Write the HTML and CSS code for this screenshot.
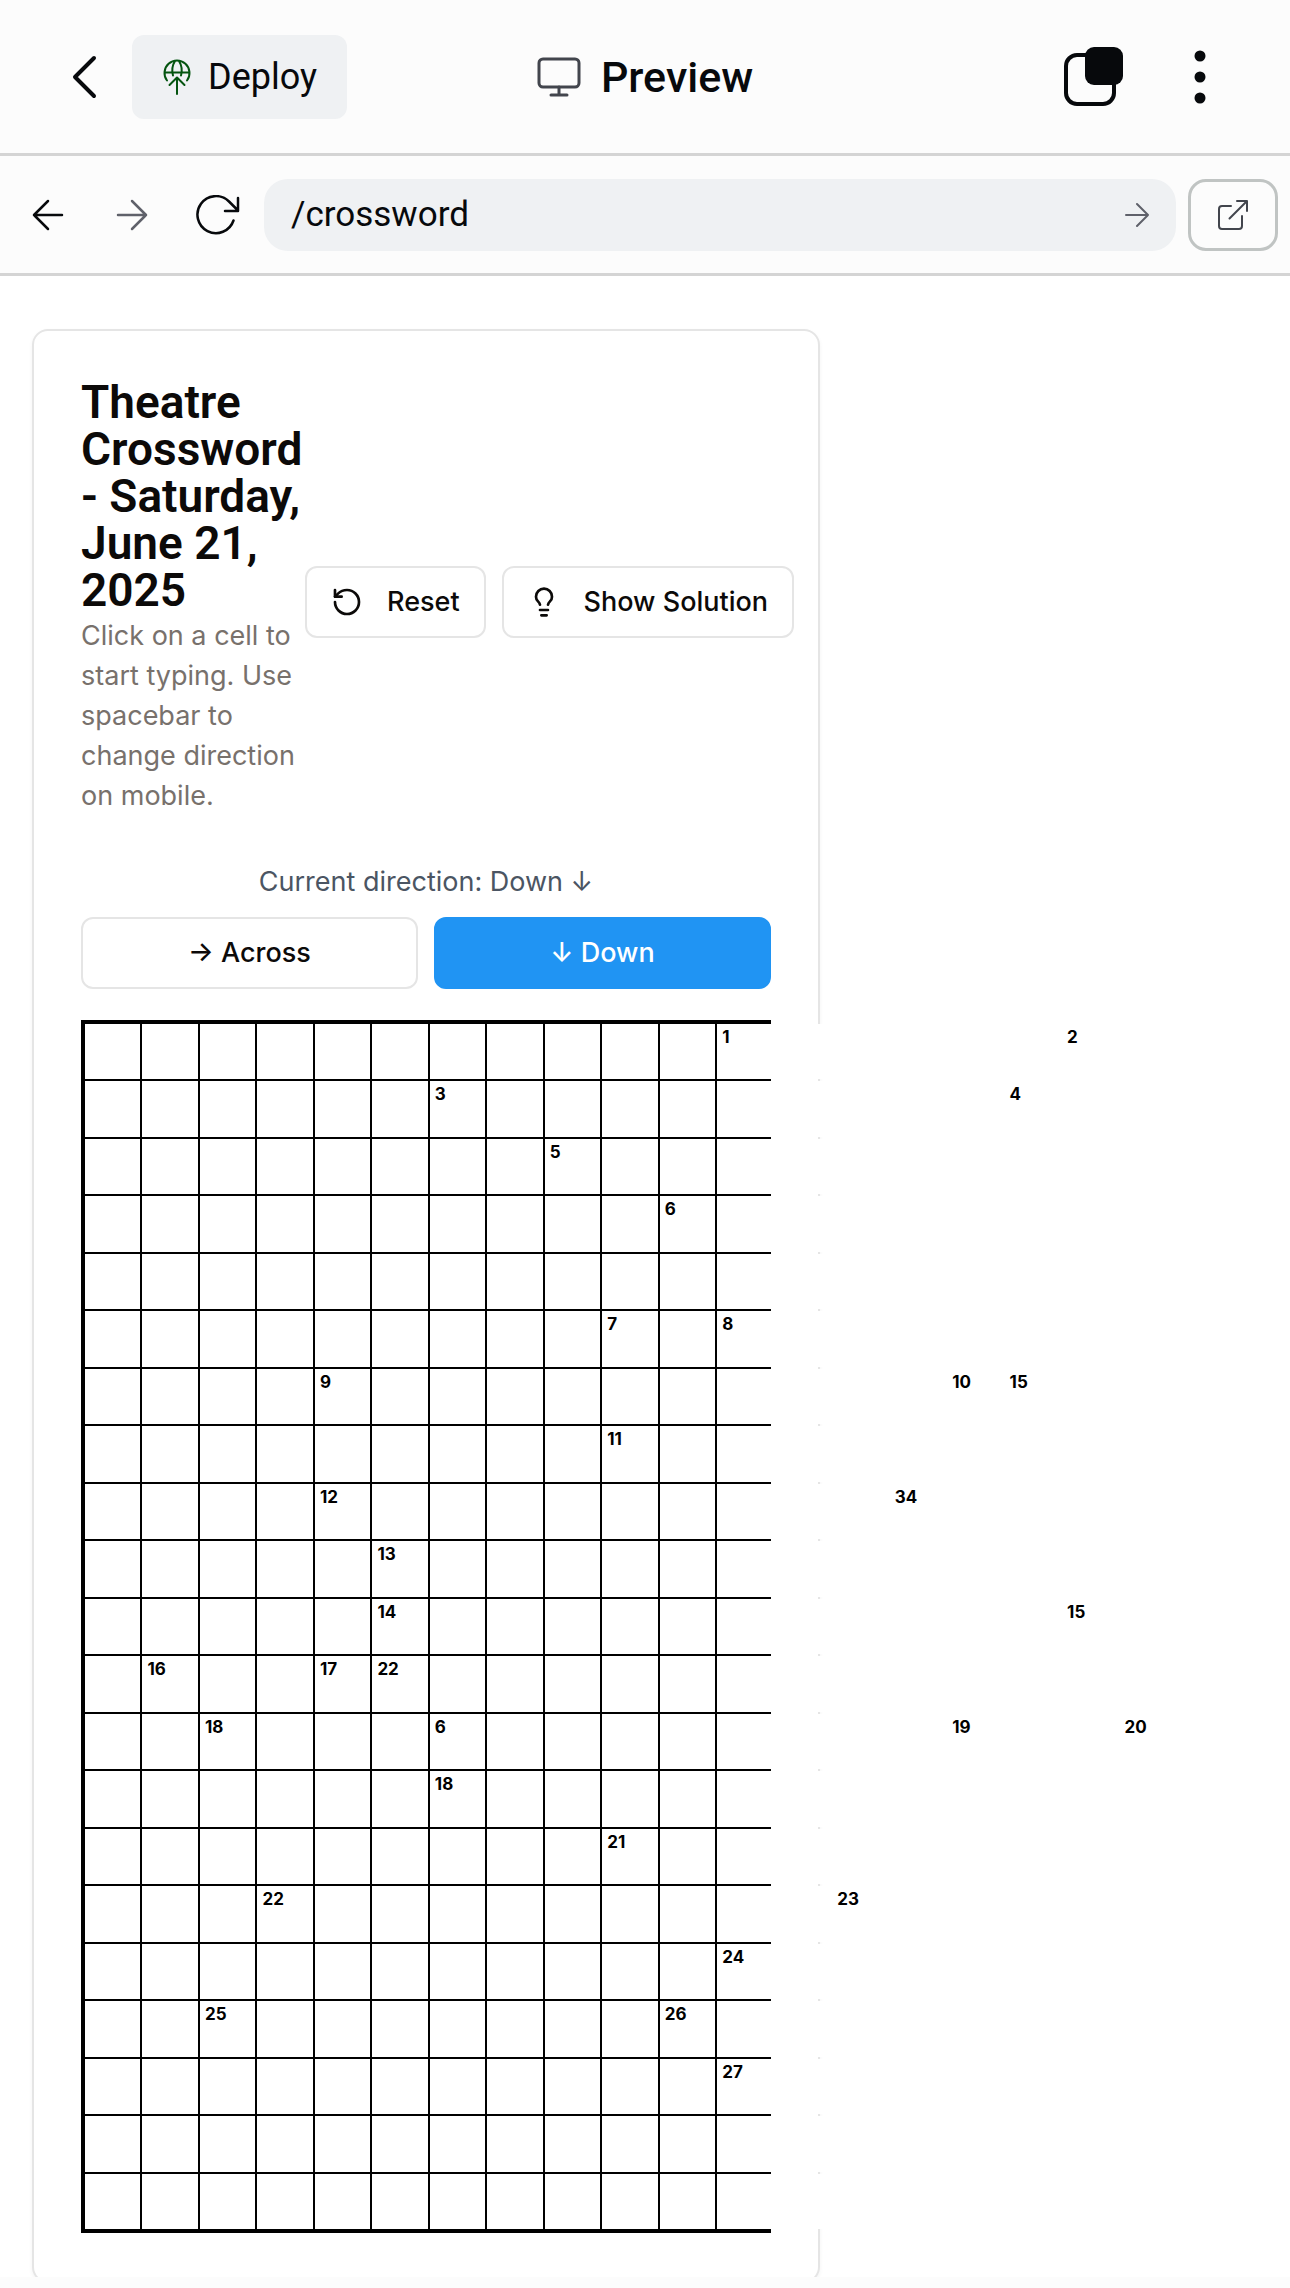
FILE: index.html
```html
<!DOCTYPE html>
<html lang="en">
<head>
<meta charset="utf-8">
<meta name="viewport" content="width=device-width, initial-scale=1">
<title>Theatre Crossword</title>
<link rel="stylesheet" href="styles.css">
</head>
<body>
<header class="topbar">
  <div class="topbar-left">
    <button class="icon-button" type="button" aria-label="Back">
      <svg width="26" height="44" viewBox="0 0 26 44" fill="none" stroke="#07090c" stroke-width="4" stroke-linecap="round" stroke-linejoin="round"><path d="M22 3 3 22l19 19"/></svg>
    </button>
    <button class="deploy" type="button">
      <svg width="28" height="36" viewBox="0 0 28 36" fill="none" stroke="#04540f" stroke-width="2" stroke-linecap="round" stroke-linejoin="round">
        <path d="M4 21.500A12.500 12.500 0 1 1 24 21.500M1.500 13.500h25M12 2C9.500 6 8.500 11 10 16.500M16 2C18.500 6 19.500 11 18 16.500M14 35V18.500M6.500 26l7.500-7.500 7.500 7.500"/>
      </svg>
      Deploy
    </button>
  </div>
  <h1 class="tab-title">
    <svg width="44" height="42" viewBox="0 0 44 42" fill="none" stroke="#42454d" stroke-width="3" stroke-linecap="round" stroke-linejoin="round"><rect x="2" y="3" width="40" height="28" rx="4"/><path d="M22 31v8M14 39h16"/></svg>
    Preview
  </h1>
  <div class="topbar-right">
    <button class="icon-button" type="button" aria-label="Tabs">
      <svg width="60" height="60" viewBox="0 0 60 60"><rect x="2" y="8" width="48" height="49" rx="11" fill="none" stroke="#07090c" stroke-width="4"/><rect x="21" y="0" width="38" height="38" rx="9" fill="#07090c"/></svg>
    </button>
    <button class="icon-button" type="button" aria-label="More">
      <svg width="12" height="54" viewBox="0 0 12 54" fill="#07090c"><circle cx="6" cy="6" r="5.500"/><circle cx="6" cy="27" r="5.500"/><circle cx="6" cy="48" r="5.500"/></svg>
    </button>
  </div>
</header>

<nav class="addressbar" aria-label="Page navigation">
  <div class="history">
    <button class="icon-button" type="button" aria-label="Go back">
      <svg width="32" height="32" viewBox="0 0 32 32" fill="none" stroke="#07090c" stroke-width="2.500" stroke-linecap="round" stroke-linejoin="round"><path d="M30 16H2M16 2 2 16l14 14"/></svg>
    </button>
    <button class="icon-button" type="button" aria-label="Go forward">
      <svg width="32" height="32" viewBox="0 0 32 32" fill="none" stroke="#5f616a" stroke-width="2.500" stroke-linecap="round" stroke-linejoin="round"><path d="M2 16h28M16 2l14 14-14 14"/></svg>
    </button>
    <button class="icon-button" type="button" aria-label="Reload">
      <svg width="44" height="40" viewBox="0 0 44 40" fill="none" stroke="#07090c" stroke-width="2.500" stroke-linecap="round" stroke-linejoin="round"><path d="M37.500 25.500A18.500 18.500 0 1 1 33 6.500L42 15.500M42 3v13H29"/></svg>
    </button>
  </div>
  <div class="address">
    <input class="address-input" type="text" value="/crossword" aria-label="Path">
    <button class="icon-button" type="button" aria-label="Go">
      <svg width="24" height="26" viewBox="0 0 24 26" fill="none" stroke="#5f616a" stroke-width="2" stroke-linecap="round" stroke-linejoin="round"><path d="M1 13h22M12 2l11 11-11 11"/></svg>
    </button>
  </div>
  <button class="open-external" type="button" aria-label="Open in new tab">
    <svg width="32" height="32" viewBox="0 0 32 32" fill="none" stroke="#42454d" stroke-width="2" stroke-linecap="round" stroke-linejoin="round"><path d="M14 7H5a3 3 0 0 0-3 3v17a3 3 0 0 0 3 3h17a3 3 0 0 0 3-3V17M12.500 19.500 30 2M20 2h10v10"/></svg>
  </button>
</nav>

<main class="viewport">
  <section class="card">
    <div class="card-header">
      <div class="card-heading">
        <h2 class="card-title">Theatre Crossword - Saturday, June 21, 2025</h2>
        <p class="card-text">Click on a cell to start typing. Use spacebar to change direction on mobile.</p>
      </div>
      <div class="card-actions">
        <button class="button button-icon" type="button">
          <svg width="32" height="32" viewBox="0 0 24 24" fill="none" stroke="currentColor" stroke-width="2" stroke-linecap="round" stroke-linejoin="round"><path d="M3 12a9 9 0 1 0 9-9 9.750 9.750 0 0 0-6.740 2.740L3 8"/><path d="M3 3v5h5"/></svg>
          Reset
        </button>
        <button class="button button-icon" type="button">
          <svg width="32" height="32" viewBox="0 0 24 24" fill="none" stroke="currentColor" stroke-width="2" stroke-linecap="round" stroke-linejoin="round"><path d="M15 14c.2-1 .7-1.700 1.500-2.500 1-.9 1.500-2.200 1.500-3.500A6 6 0 0 0 6 8c0 1 .2 2.200 1.500 3.500.7.7 1.300 1.500 1.500 2.500M9 18h6M10 22h4"/></svg>
          Show Solution
        </button>
      </div>
    </div>
    <p class="direction-text">Current direction: Down ↓</p>
    <div class="direction-buttons">
      <button class="button" type="button" aria-pressed="false">→ Across</button>
      <button class="button button-primary" type="button" aria-pressed="true">↓ Down</button>
    </div>
    <div class="board">
      <div class="board-cells" id="board"></div>
    </div>
  </section>
</main>
<footer class="bottombar"></footer>
<script src="board.js"></script>
</body>
</html>
```
FILE: styles.css
```css
* {
  box-sizing: border-box;
}

body {
  margin: 0;
  height: 100vh;
  display: flex;
  flex-direction: column;
  overflow: hidden;
  background: #fff;
  color: #0c0a09;
  font-family: Inter, sans-serif;
  font-size: 27px;
  line-height: 40px;
}

h1,
h2,
p {
  margin: 0;
}

svg {
  display: block;
  flex: none;
}

button,
input {
  font: inherit;
  color: inherit;
}

.icon-button {
  display: flex;
  padding: 0;
  border: 0;
  background: none;
}

/* App chrome */

.topbar {
  flex: none;
  display: grid;
  grid-template-columns: 1fr auto 1fr;
  align-items: center;
  padding: 35px 72px 34px;
  border-bottom: 3px solid #d4d4d4;
  background: #fcfcfc;
  color: #07090c;
  font-family: Roboto, sans-serif;
}

.topbar-left {
  display: flex;
  align-items: center;
  gap: 34px;
}

.deploy {
  display: flex;
  align-items: center;
  gap: 17px;
  height: 84px;
  padding: 0 30px 0 31px;
  border: 0;
  border-radius: 12px;
  background: #eff1f3;
  font-size: 36px;
}

.tab-title {
  display: flex;
  align-items: center;
  gap: 20px;
  font-size: 43px;
  font-weight: 500;
}

.topbar-right {
  display: flex;
  align-items: center;
  justify-content: flex-end;
  gap: 70px;
  padding-right: 12px;
}

.addressbar {
  flex: none;
  display: flex;
  align-items: center;
  gap: 12px;
  padding: 23px 12px 22px 32px;
  border-bottom: 3px solid #d4d4d4;
  background: #fcfcfc;
}

.history {
  display: flex;
  align-items: center;
  gap: 52px;
  margin-right: 12px;
}

.history .icon-button:last-child {
  margin-left: -4px;
}

.address {
  flex: 1;
  min-width: 0;
  display: flex;
  align-items: center;
  height: 72px;
  padding: 0 27px;
  border-radius: 24px;
  background: #eff1f3;
}

.address-input {
  flex: 1;
  min-width: 0;
  padding: 0;
  border: 0;
  background: none;
  color: #07090c;
  font-family: Roboto, sans-serif;
  font-size: 35px;
}

.open-external {
  display: flex;
  align-items: center;
  justify-content: center;
  width: 90px;
  height: 72px;
  padding: 0;
  border: 3px solid #c0c4c3;
  border-radius: 18px;
  background: none;
}

/* Previewed page */

.viewport {
  flex: 1;
  min-height: 0;
  padding: 53px 32px 0;
  overflow: auto;
  scrollbar-width: none;
}

.card {
  max-width: 788px;
  padding: 48px 47px;
  border: 2px solid #e5e5e5;
  border-radius: 16px;
  box-shadow: 0 2px 4px rgba(0, 0, 0, 0.05);
}

.card-header {
  display: flex;
  align-items: center;
  margin-bottom: 46px;
}

.card-heading {
  flex: none;
  width: 224px;
}

.card-title {
  margin-bottom: 2px;
  font-family: Roboto, sans-serif;
  font-size: 46px;
  font-weight: 600;
  line-height: 47px;
}

.card-text {
  color: #78716c;
}

.card-actions {
  flex: none;
  display: flex;
  gap: 16px;
  padding-top: 9px;
}

.button {
  display: flex;
  align-items: center;
  justify-content: center;
  height: 72px;
  padding: 0 24px;
  border: 2px solid #e5e5e5;
  border-radius: 12px;
  background: #fff;
  font-weight: 500;
  white-space: nowrap;
}

.button-icon {
  gap: 24px;
}

.button-primary {
  border-color: #2094f3;
  background: #2094f3;
  color: #fff;
}

.direction-text {
  margin-bottom: 15px;
  color: #4b5563;
  text-align: center;
}

.direction-buttons {
  display: grid;
  grid-template-columns: 1fr 1fr;
  gap: 16px;
  margin-bottom: 31px;
}

.board {
  padding: 4px;
  background: #000;
}

.board-cells {
  display: grid;
  grid-template-columns: repeat(21, 1fr);
  grid-template-rows: repeat(21, 1fr);
  gap: 2px;
  width: 1205px;
  aspect-ratio: 1;
}

.cell {
  position: relative;
  min-width: 0;
  min-height: 0;
  background: #fff;
}

.cell-number {
  position: absolute;
  top: 4px;
  left: 5px;
  color: #000;
  font-size: 17px;
  font-weight: 700;
  line-height: 18px;
}

.cell-input {
  display: block;
  width: 100%;
  height: 100%;
  padding: 0;
  border: 0;
  background: none;
  text-align: center;
}

.bottombar {
  flex: none;
  height: 11px;
  background: #fcfcfc;
}
```
FILE: board.js
```js
const SIZE = 21;

// Clue numbers per row, keyed by column.
const clues = {
  0: { 11: 1, 17: 2 },
  1: { 6: 3, 16: 4 },
  2: { 8: 5 },
  3: { 10: 6 },
  5: { 9: 7, 11: 8 },
  6: { 4: 9, 15: 10, 16: 15 },
  7: { 9: 11 },
  8: { 4: 12, 14: 34 },
  9: { 5: 13 },
  10: { 5: 14, 17: 15 },
  11: { 1: 16, 4: 17, 5: 22 },
  12: { 2: 18, 6: 6, 15: 19, 18: 20 },
  13: { 6: 18 },
  14: { 9: 21 },
  15: { 3: 22, 13: 23 },
  16: { 11: 24 },
  17: { 2: 25, 10: 26 },
  18: { 11: 27 }
};

const board = document.getElementById("board");

for (let row = 0; row < SIZE; row++) {
  for (let col = 0; col < SIZE; col++) {
    const cell = document.createElement("div");
    cell.className = "cell";

    const input = document.createElement("input");
    input.className = "cell-input";
    input.type = "text";
    input.maxLength = 1;
    input.setAttribute("aria-label", `Row ${row + 1}, column ${col + 1}`);
    cell.append(input);

    const clue = clues[row] && clues[row][col];
    if (clue) {
      const number = document.createElement("span");
      number.className = "cell-number";
      number.textContent = clue;
      cell.append(number);
    }
    board.append(cell);
  }
}
```
